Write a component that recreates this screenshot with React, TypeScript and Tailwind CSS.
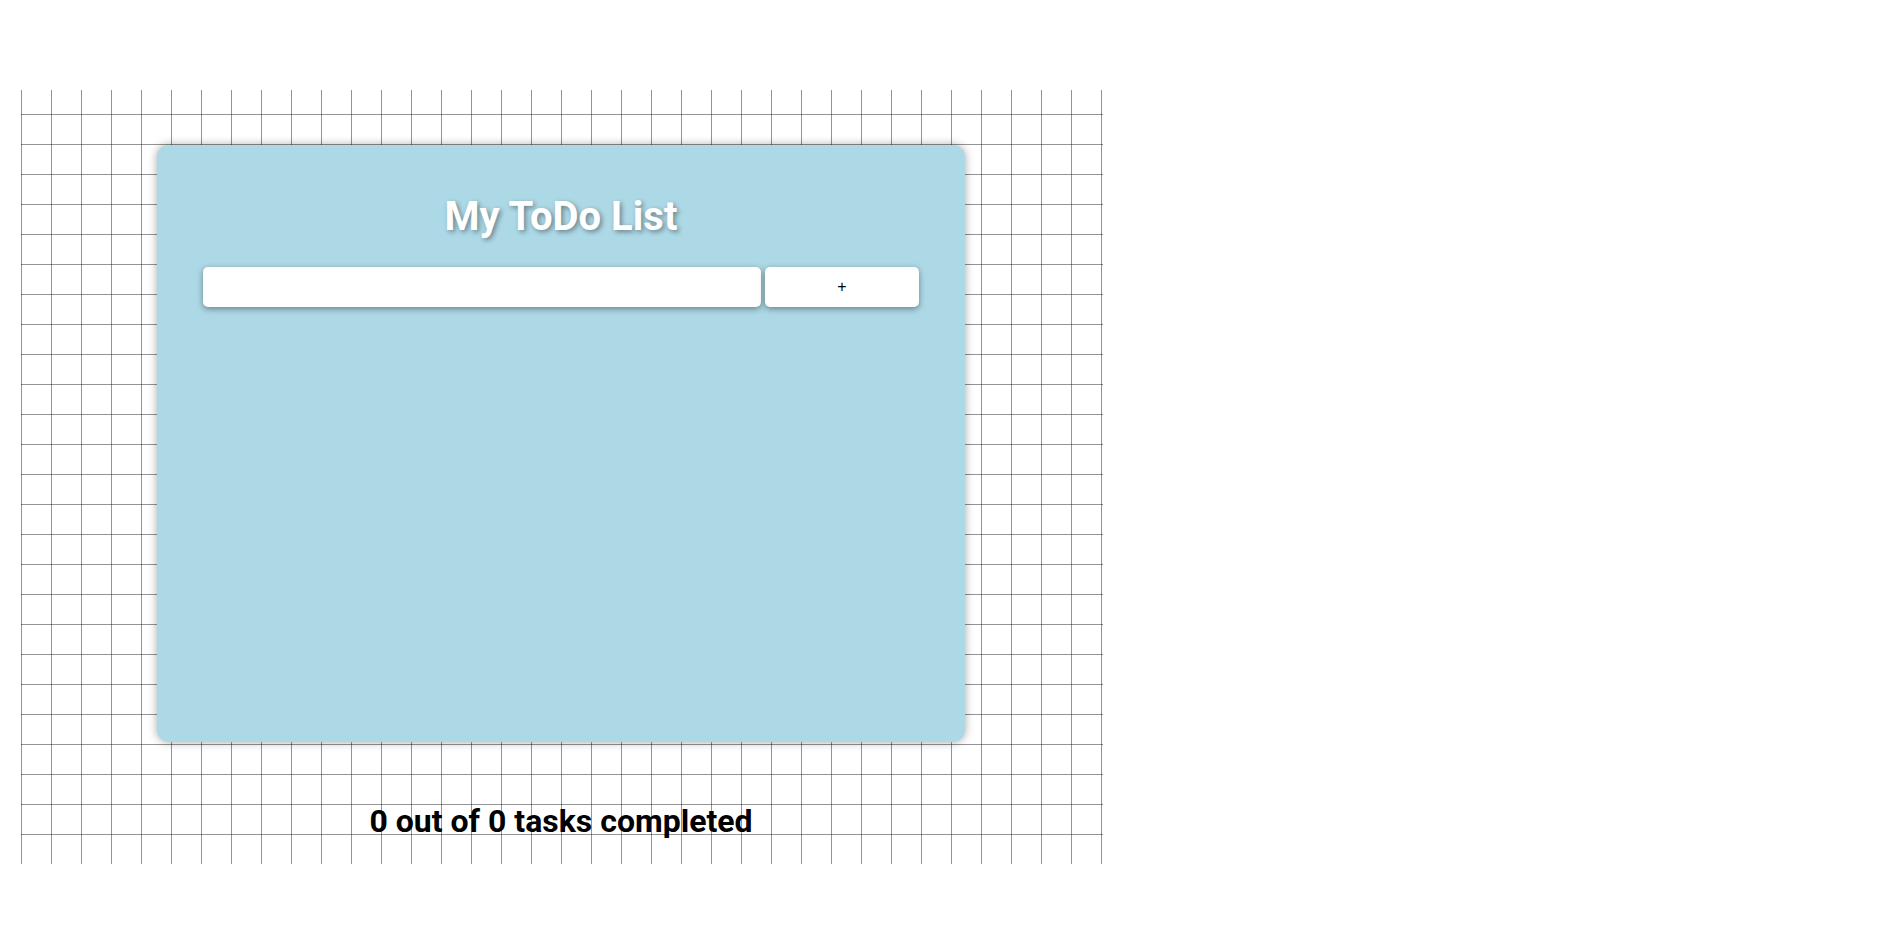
export default function App() {
  return (
    <div className="min-h-[930px] bg-white pl-[21px] pt-[90px] font-['Roboto',sans-serif]">
      <div className="flex h-[774px] w-[1082px] flex-col items-center bg-white bg-[linear-gradient(to_right,rgba(0,0,0,0.42)_1px,transparent_1px),linear-gradient(to_bottom,rgba(0,0,0,0.42)_1px,transparent_1px)] bg-[length:30px_30px] bg-[position:0_0,0_24px] pr-[2px] pt-[55px]">
        <div className="flex h-[597px] w-[808px] flex-col rounded-[12px] bg-[#add8e6] px-[46px] pt-[52px] shadow-[0_0_10px_rgba(0,0,0,0.35)]">
          <h1 className="text-center text-[40px] font-bold leading-none text-white [text-shadow:2px_2px_5px_rgba(0,0,0,0.4)]">
            My ToDo List
          </h1>
          <form className="mt-[30px] flex gap-[4px]" onSubmit={(e) => e.preventDefault()}>
            <input
              type="text"
              className="h-[40px] w-[558px] rounded-[5px] bg-white px-3 text-sm outline-none shadow-[0_2px_6px_rgba(0,0,0,0.4)]"
            />
            <button
              type="submit"
              className="h-[40px] w-[154px] rounded-[5px] bg-white font-['Liberation_Sans',sans-serif] text-[16px] leading-none text-black shadow-[0_2px_6px_rgba(0,0,0,0.4)]"
            >
              +
            </button>
          </form>
        </div>
        <p className="mt-[63px] text-[32px] font-bold leading-none text-black">0 out of 0 tasks completed</p>
      </div>
    </div>
  );
}
